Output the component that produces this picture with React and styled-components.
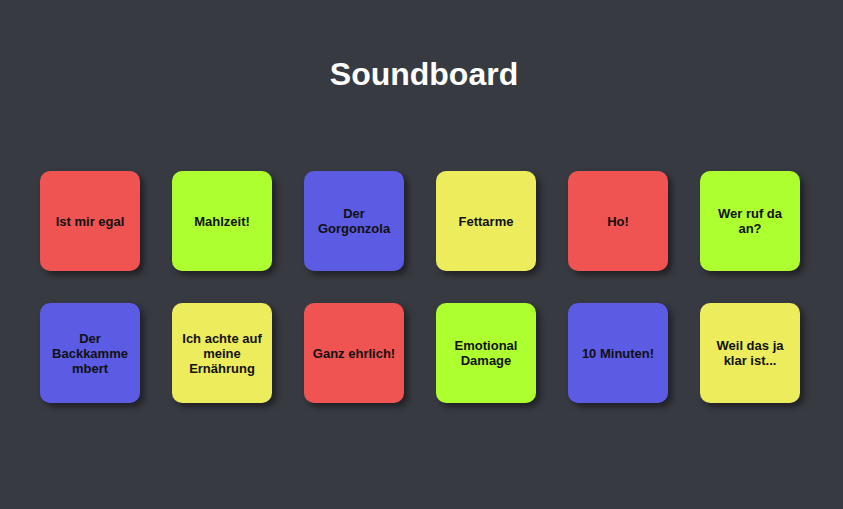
import React from 'react'
import styled, { createGlobalStyle } from 'styled-components'

const GlobalStyle = createGlobalStyle`
    html, body {
        margin: 0;
        padding: 0;
        background-color: #383a42;
        font-family: "Liberation Sans", Arial, sans-serif;
    }
`

const sounds = [
    { label: 'Ist mir egal', color: '#ef5352' },
    { label: 'Mahlzeit!', color: '#adff2f' },
    { label: 'Der Gorgonzola', color: '#5b5be3' },
    { label: 'Fettarme', color: '#ecec5d' },
    { label: 'Ho!', color: '#ef5352' },
    { label: 'Wer ruf da an?', color: '#adff2f' },
    { label: 'Der Backkammembert', color: '#5b5be3' },
    { label: 'Ich achte auf meine Ernährung', color: '#ecec5d' },
    { label: 'Ganz ehrlich!', color: '#ef5352' },
    { label: 'Emotional Damage', color: '#adff2f' },
    { label: '10 Minuten!', color: '#5b5be3' },
    { label: 'Weil das ja klar ist...', color: '#ecec5d' },
]

const App = () => {
    const play = (label) => {
        console.log(label)
    }

    return (
        <Page>
            <GlobalStyle />
            <Title>Soundboard</Title>
            <Board>
                {sounds.map((el) => (
                    <SoundButton key={el.label} $color={el.color} onClick={() => play(el.label)}>
                        {el.label}
                    </SoundButton>
                ))}
            </Board>
        </Page>
    )
}

export default App

const Page = styled.div`
    min-height: 509px;
    padding-top: 52px;
    box-sizing: border-box;
`
const Title = styled.h1`
    margin: 0;
    padding-left: 5px;
    color: #ffffff;
    font-size: 32px;
    font-weight: bold;
    text-align: center;
    line-height: 44px;
`
const Board = styled.div`
    display: grid;
    grid-template-columns: repeat(6, 100px);
    gap: 32px;
    padding: 75px 40px 0 40px;
`
const SoundButton = styled.button`
    width: 100px;
    height: 100px;
    padding: 8px;
    border: none;
    border-radius: 10px;
    background-color: ${(p) => p.$color};
    box-shadow: 4px 4px 6px rgba(0, 0, 0, 0.45);
    color: #111;
    font-family: "Liberation Sans", Arial, sans-serif;
    font-size: 13px;
    font-weight: bold;
    overflow-wrap: anywhere;
    cursor: pointer;
`
